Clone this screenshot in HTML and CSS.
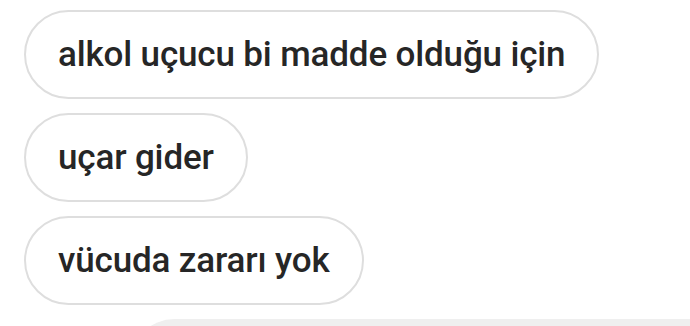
FILE: index.html
```html
<!DOCTYPE html>
<html lang="tr">
<head>
  <meta charset="UTF-8" />
  <meta name="viewport" content="width=device-width, initial-scale=1.0"/>
  <title>Mesajlar</title>
  <link rel="stylesheet" href="styles.css">
</head>
<body>
  <div class="thread">
    <div class="bubble">alkol uçucu bi madde olduğu için</div>
    <div class="bubble">uçar gider</div>
    <div class="bubble">vücuda zararı yok</div>
    <div class="bubble mine"></div>
  </div>
</body>
</html>
```

FILE: styles.css
```css
* { box-sizing: border-box; }

html, body {
  height: 100%;
  overflow: hidden;
}

body {
  margin: 0;
  background: #fff;
  font-family: Roboto, "Liberation Sans", Arial, sans-serif;
  color: #262626;
}

.thread {
  display: flex;
  flex-direction: column;
  align-items: flex-start;
  gap: 14px;
  padding: 10px 0 0 24px;
}

.bubble {
  height: 89px;
  line-height: 85px;
  padding: 0 32px;
  border: 2px solid #dedede;
  border-radius: 45px;
  font-size: 35px;
  font-weight: 500;
  letter-spacing: -0.15px;
  white-space: nowrap;
}

.bubble.mine {
  margin-left: 106px;
  width: 640px;
  border: none;
  background: #efefef;
}
```
